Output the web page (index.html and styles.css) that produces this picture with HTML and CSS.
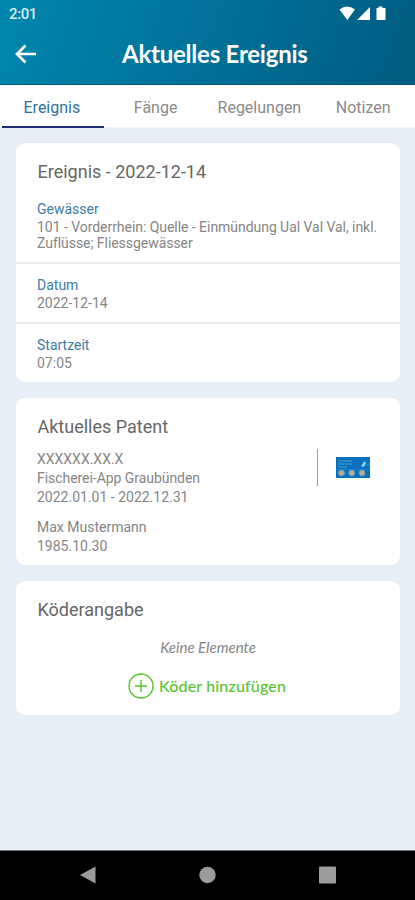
FILE: index.html
```html
<!DOCTYPE html>
<html lang="de">
<head>
<meta charset="utf-8">
<title>Aktuelles Ereignis</title>
<link rel="stylesheet" href="styles.css">
</head>
<body>
<header class="header">
  <div class="status">
    <span class="clock">2:01</span>
    <svg class="status-icons" width="50" height="16" viewBox="0 0 50 16" fill="#fff"><path d="M1.500 3.500Q9-2.500 17 3.500L9.300 14ZM19 14L32 1V14ZM38.500 2h2V.5h4V2h3v12h-9Z"/></svg>
  </div>
  <div class="appbar">
    <svg class="back" width="22" height="20" viewBox="0 0 22 20" fill="none" stroke="#fff" stroke-width="2.700"><path d="M10.500 1.500L2 10l8.500 8.500M2.500 10H21"/></svg>
    <h1>Aktuelles Ereignis</h1>
  </div>
</header>
<nav class="tabs">
  <span class="tab active">Ereignis</span>
  <span class="tab">Fänge</span>
  <span class="tab">Regelungen</span>
  <span class="tab">Notizen</span>
</nav>
<main class="content">
  <section class="card">
    <h2>Ereignis - 2022-12-14</h2>
    <div class="row first"><h3>Gewässer</h3><p class="water">101 - Vorderrhein: Quelle - Einmündung Ual Val Val, inkl. Zuflüsse; Fliessgewässer</p></div>
    <div class="row"><h3>Datum</h3><p>2022-12-14</p></div>
    <div class="row"><h3>Startzeit</h3><p>07:05</p></div>
  </section>
  <section class="card patent">
    <h2>Aktuelles Patent</h2>
    <div class="patent-body">
      <div class="lines">
        <p class="number">XXXXXX.XX.X</p>
        <p class="app">Fischerei-App Graubünden</p>
        <p>2022.01.01 - 2022.12.31</p>
        <p class="person">Max Mustermann</p>
        <p>1985.10.30</p>
      </div>
      <div class="thumb">
        <svg width="34" height="21" viewBox="0 0 34 21"><path fill="#0870bd" d="M0 0h34v21H0z"/><path fill="#1c80c8" d="M0 12h34v1H0zM28 9l6-4v4z"/><path stroke="#4ba0d8" stroke-width="1.200" d="M2 4h14M2 7h6m1 0h7M2 10h9"/><path fill="#8bd2ef" d="M27 6l2-2 1 2-2 4-3-1z"/><g fill="#c2a88f" stroke="#5a9cc4"><circle cx="5.500" cy="16" r="3"/><circle cx="15.800" cy="16" r="3"/><circle cx="26" cy="16" r="3"/></g></svg>
      </div>
    </div>
  </section>
  <section class="card bait">
    <h2>Köderangabe</h2>
    <p class="empty">Keine Elemente</p>
    <div class="add">
      <svg width="26" height="26" viewBox="0 0 26 26" fill="none" stroke="#55c52c" stroke-width="1.400"><circle cx="13" cy="13" r="12"/><path d="M13 7v12M7 13h12"/></svg>
      <span>Köder hinzufügen</span>
    </div>
  </section>
</main>
<footer class="navbar">
  <svg width="16" height="18" viewBox="0 0 16 18"><path d="M0 9L15.500.500v17z"/></svg>
  <svg width="17" height="18" viewBox="0 0 17 18"><circle cx="8.500" cy="9" r="8.200"/></svg>
  <svg width="17" height="18" viewBox="0 0 17 18"><rect y=".5" width="17" height="17" rx="1"/></svg>
</footer>
</body>
</html>
```
FILE: styles.css
```css
* { box-sizing: border-box; }
body { margin: 0; width: 415px; height: 900px; display: flex; flex-direction: column; overflow: hidden; background: #e6eef8; font-family: Roboto, sans-serif; color: #858585; }
h1, h2, h3, p { margin: 0; font-weight: 400; white-space: nowrap; }
svg { display: block; flex: none; }
.header { height: 85px; background: linear-gradient(110deg, #0087ae 0%, #007198 50%, #005b80 100%); border-bottom: 1px solid #00547d; color: #fff; }
.status { height: 28px; padding: 6px 27px 0 9px; display: flex; justify-content: space-between; }
.clock { font-size: 15px; line-height: 17px; font-weight: 500; color: #d9edf3; letter-spacing: -.4px; }
.appbar { height: 52px; display: grid; grid-template-columns: 107px 1fr; padding-left: 15px; align-items: center; }
h1 { font: 700 24px/30px Lato, sans-serif; letter-spacing: -.23px; }
.tabs { height: 43px; display: grid; grid-template-columns: repeat(4, 1fr); background: #fff; border-bottom: 1px solid #f1f5fa; }
.tab { font-size: 16px; line-height: 45px; height: 43px; text-align: center; color: #8a8a8a; }
.active { color: #30729a; background: linear-gradient(#182d74, #182d74) 2px 41px / 102px 2px no-repeat; }
.content { padding: 15px 15px 0 16px; flex: 1; display: flex; flex-direction: column; gap: 16px; }
.card { background: #fff; border-radius: 9px; height: 239px; padding-top: 18px; }
h2 { font-size: 18px; line-height: 22px; padding-left: 21.5px; color: #666; }
h3 { font-size: 14px; line-height: 18px; color: #3d7ca1; }
p { font-size: 14px; line-height: 19px; }
.row { height: 60px; padding: 12px 21px 0; border-top: 2px solid #ebeced; }
.row.first { height: 79px; padding-top: 17px; border: 0; }
.row .water { line-height: 16px; letter-spacing: -.045px; margin-top: 1px; white-space: normal; width: 345px; }
.patent { height: 167px; }
.patent-body { display: flex; justify-content: space-between; padding: 12px 30px 0 21px; }
.person { margin-top: 11px; }
.app { letter-spacing: -.05px; }
.thumb { height: 37px; margin-top: -1px; padding: 8px 0 0 18px; border-left: 1px solid #9c9c9c; }
.bait { height: 134px; }
.empty { font: italic 15px/18px Lato, sans-serif; text-align: center; margin-top: 17px; }
.add { display: flex; align-items: center; padding-left: 112px; gap: 5px; margin-top: 17px; color: #55c52c; font: 500 16px/26px "Lato Medium", Lato, sans-serif; letter-spacing: .16px; }
.navbar { height: 50px; background: #000; border-top: 1px solid #777; display: flex; justify-content: space-between; padding: 15px 79px 0 80px; fill: #9c9c9c; }
```
